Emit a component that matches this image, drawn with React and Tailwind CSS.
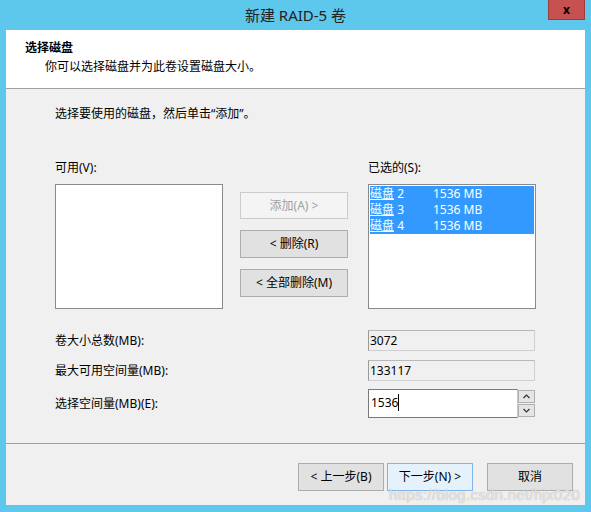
import { useState } from "react";

const font = { fontFamily: '"Noto Sans", "Noto Sans CJK SC", sans-serif' };

function WinButton({ children, disabled, focused, className = "" }) {
    let look = "bg-[#e1e1e1] border-[#adadad] text-black";
    if (disabled) look = "bg-[#f4f4f4] border-[#cccccc] text-[#a0a0a0]";
    if (focused) look = "bg-[#e5f1fb] border-[#7eb4ea] text-black";
    return (
        <div className={`flex items-center justify-center border text-[12px] leading-none ${look} ${className}`}>
            {children}
        </div>
    );
}

function Chevron({ up }) {
    return (
        <svg width="7" height="5" viewBox="0 0 7 5">
            <path d={up ? "M0.5 4 L3.5 1 L6.5 4" : "M0.5 1 L3.5 4 L6.5 1"} fill="none" stroke="#333" strokeWidth="1.2" />
        </svg>
    );
}

export default function App() {
    const [disks] = useState([
        { name: "磁盘", n: 2, size: "1536 MB" },
        { name: "磁盘", n: 3, size: "1536 MB" },
        { name: "磁盘", n: 4, size: "1536 MB" },
    ]);

    return (
        <div className="w-[591px] h-[512px] bg-[#5ec8ec] flex flex-col px-[6px] pb-[7px] overflow-hidden" style={font}>
            {/* title bar */}
            <div className="h-[30px] shrink-0 relative flex items-center justify-center">
                <span className="text-[15px] text-[#222] leading-none">新建 RAID-5 卷</span>
                <div className="absolute right-0 top-0 w-[37px] h-[20px] bg-[#c75050] border border-[#9e3b3b] border-t-0 flex items-center justify-center">
                    <span className="text-[12px] font-bold text-black leading-none">x</span>
                </div>
            </div>

            {/* header */}
            <div className="h-[59px] shrink-0 bg-white border-b border-[#a0a0a0] pl-[19px] pt-[10px]">
                <div className="text-[12px] leading-[16px] font-semibold text-black">选择磁盘</div>
                <div className="text-[12px] leading-[16px] text-black pl-[20px] mt-[3px]">你可以选择磁盘并为此卷设置磁盘大小。</div>
            </div>

            {/* body */}
            <div className="flex-1 bg-[#f0f0f0] pl-[49px] pt-[17px] flex flex-col">
                <div className="text-[12px] leading-[16px] text-black">选择要使用的磁盘，然后单击“添加”。</div>

                <div className="flex mt-[38px]">
                    <div className="flex flex-col w-[168px]">
                        <div className="text-[12px] leading-[16px] text-black">可用(V):</div>
                        <div className="mt-[8px] h-[125px] bg-white border border-[#8a8a8a]"></div>
                    </div>

                    <div className="flex flex-col w-[108px] ml-[17px] pt-[32px] gap-[11px]">
                        <WinButton disabled className="h-[27px]">添加(A) &gt;</WinButton>
                        <WinButton className="h-[28px]">&lt; 删除(R)</WinButton>
                        <WinButton className="h-[28px]">&lt; 全部删除(M)</WinButton>
                    </div>

                    <div className="flex flex-col w-[168px] ml-[20px]">
                        <div className="text-[12px] leading-[16px] text-black">已选的(S):</div>
                        <div className="mt-[8px] h-[125px] bg-white border border-[#8a8a8a] p-px">
                            {disks.map(d => (
                                <div key={d.n} className="h-[16px] bg-[#3399ff] text-white text-[12px] leading-[16px] flex">
                                    <span className="w-[63px]"><span className="underline">{d.name}</span> {d.n}</span>
                                    <span>{d.size}</span>
                                </div>
                            ))}
                        </div>
                    </div>
                </div>

                <div className="flex flex-col mt-[21px] w-[480px]">
                    <div className="flex items-center h-[21px]">
                        <span className="w-[313px] text-[12px] text-black">卷大小总数(MB):</span>
                        <div className="w-[167px] h-[21px] bg-[#f0f0f0] border border-[#cfcfcf] border-l-[#9a9a9a] border-t-[#b8b8b8] text-[12px] leading-[19px] pl-px text-black">3072</div>
                    </div>
                    <div className="flex items-center h-[21px] mt-[9px]">
                        <span className="w-[313px] text-[12px] text-black">最大可用空间量(MB):</span>
                        <div className="w-[167px] h-[21px] bg-[#f0f0f0] border border-[#cfcfcf] border-l-[#9a9a9a] border-t-[#b8b8b8] text-[12px] leading-[19px] pl-px text-black">133117</div>
                    </div>
                    <div className="flex items-center h-[29px] mt-[8px]">
                        <span className="w-[313px] text-[12px] text-black">选择空间量(MB)(E):</span>
                        <div className="w-[150px] h-[29px] bg-white border border-[#7a7a7a] border-r-[#c8c8c8] text-[12px] leading-[25px] pl-[2px] text-black flex">
                            1536<span className="w-px h-[17px] bg-black mt-[4px]"></span>
                        </div>
                        <div className="w-[17px] h-[29px] flex flex-col justify-center gap-px">
                            <div className="h-[13px] bg-[#e5e5e5] border border-[#b0b0b0] flex items-center justify-center"><Chevron up /></div>
                            <div className="h-[13px] bg-[#e5e5e5] border border-[#b0b0b0] flex items-center justify-center"><Chevron /></div>
                        </div>
                    </div>
                </div>
            </div>

            {/* footer */}
            <div className="h-[62px] shrink-0 bg-[#f0f0f0] border-t border-[#a0a0a0] relative flex items-start justify-end pr-[12px] pt-[19px]">
                <WinButton className="w-[86px] h-[28px]">&lt; 上一步(B)</WinButton>
                <WinButton focused className="w-[86px] h-[28px] ml-[3px]">下一步(N) &gt;</WinButton>
                <WinButton className="w-[86px] h-[28px] ml-[14px]">取消</WinButton>
                <span className="absolute left-[383px] top-[43px] text-[15px] leading-none text-white/70 tracking-[0.3px]" style={{ fontFamily: '"Liberation Sans", sans-serif', textShadow: "0 0 1px #999" }}>https://blog.csdn.net/hjx020</span>
            </div>
        </div>
    );
}
